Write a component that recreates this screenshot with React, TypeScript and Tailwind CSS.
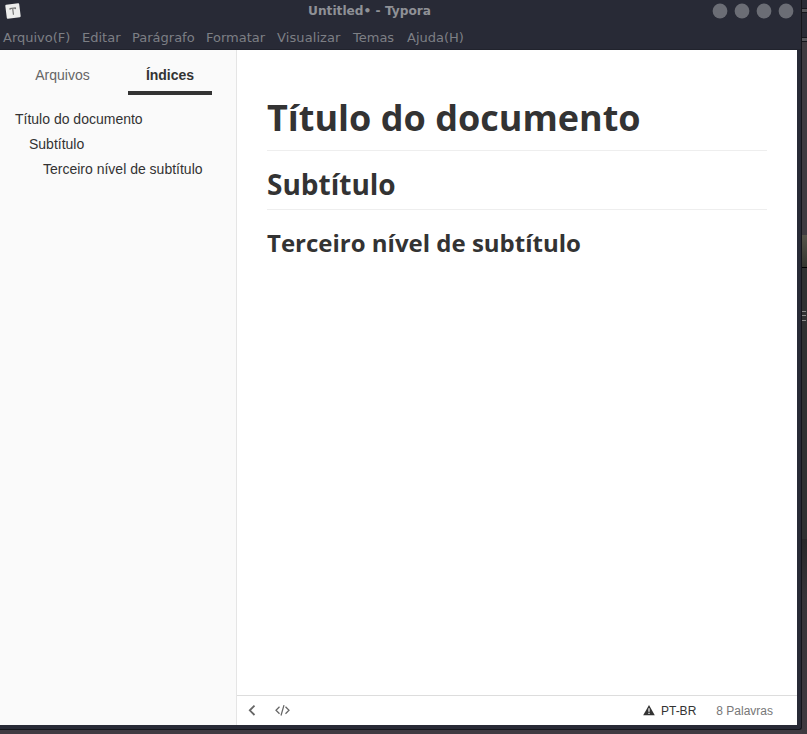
import React from "react";

const menus = [
  { label: "Arquivo(F)", width: "w-[79px]" },
  { label: "Editar", width: "w-[50px]" },
  { label: "Parágrafo", width: "w-[74px]" },
  { label: "Formatar", width: "w-[71px]" },
  { label: "Visualizar", width: "w-[76px]", spacing: "tracking-[0.1px]" },
  { label: "Temas", width: "w-[54px]" },
  { label: "Ajuda(H)", width: "w-[60px]" },
];

function TitleBar() {
  return (
    <div className="relative flex h-[22px] shrink-0 items-center justify-between pl-[5px] pr-[7px]">
      <svg width="16" height="16" viewBox="0 0 16 16" className="block">
        <g transform="rotate(-7 8 8)">
          <rect x="1" y="1" width="14" height="14" rx="1" fill="#ededed" />
          <path d="M5.1 5.3H10.9M8 5.2V11.8M5.3 4.9V6.4M10.7 4.9V6.4" stroke="#777" strokeWidth="1.2" fill="none" />
        </g>
      </svg>
      <div className="absolute left-[308px] top-[4px] whitespace-nowrap font-['DejaVu_Sans',sans-serif] text-[12.2px] font-bold leading-[15px] text-[#8f9196]">
        Untitled• - Typora
      </div>
      <div className="flex gap-[6px]">
        {[0, 1, 2, 3].map((n) => (
          <svg key={n} width="16" height="16" viewBox="0 0 16 16" className="block">
            <circle cx="8" cy="8" r="7.4" fill="#6b6d75" />
          </svg>
        ))}
      </div>
    </div>
  );
}

function MenuBar() {
  return (
    <div className="flex h-7 shrink-0 whitespace-nowrap border-b border-[#21232d] pl-[3px] pt-[8px] font-['DejaVu_Sans',sans-serif] text-[13px] leading-4 text-[#7d7f85]">
      {menus.map((m) => (
        <span key={m.label} className={`${m.width} ${m.spacing ?? ""}`}>
          {m.label}
        </span>
      ))}
    </div>
  );
}

function Sidebar() {
  return (
    <aside className="w-[237px] shrink-0 border-r border-[#e5e5e5] bg-[#fafafa] font-['Liberation_Sans',sans-serif] text-[14px] text-[#333]">
      <div className="flex h-[45px] gap-[24px] pl-[21px] text-center leading-[50px]">
        <div className="w-[83px] text-[#666]">Arquivos</div>
        <div className="w-[84px] border-b-4 border-[#333] font-bold">Índices</div>
      </div>
      <div className="whitespace-nowrap pt-3 leading-[25px]">
        <div className="pl-[15px]">Título do documento</div>
        <div className="pl-[29px]">Subtítulo</div>
        <div className="pl-[43px]">Terceiro nível de subtítulo</div>
      </div>
    </aside>
  );
}

function StatusBar() {
  return (
    <footer className="flex h-[30px] shrink-0 items-center border-t border-[#ddd] font-['Liberation_Sans',sans-serif] text-[12px]">
      <svg width="8" height="12" viewBox="0 0 8 12" className="mb-px ml-[11px]">
        <path d="M6.5 1.6L1.8 6.3L6.5 11" fill="none" stroke="#666" strokeWidth="1.8" />
      </svg>
      <svg width="15" height="12" viewBox="0 0 15 12" className="mb-px ml-[19px]">
        <path d="M4.5 2.8L1 6.3L4.5 9.8M10.5 2.8L14 6.3L10.5 9.8M9 1.1L6 11.5" fill="none" stroke="#666" strokeWidth="1.25" />
      </svg>
      <svg width="12" height="11" viewBox="0 0 12 11" className="mb-px ml-auto mr-[6px]">
        <path d="M6 .1L11.8 10.2H.2Z" fill="#333" />
        <path d="M6 3.3V6.8M6 7.8V9.1" stroke="white" strokeWidth="1.2" />
      </svg>
      <span className="mr-[20px] text-[#333]">PT-BR</span>
      <span className="mr-[24px] text-[#777]">8 Palavras</span>
    </footer>
  );
}

function Document() {
  return (
    <main className="min-h-0 flex-1 whitespace-nowrap px-[30px] font-['Open_Sans',sans-serif] font-bold text-[#333]">
      <h1 className="mt-[46px] h-[55px] border-b border-[#eee] text-[36px] leading-[43px]">Título do documento</h1>
      <h2 className="mt-[16px] h-[43px] border-b border-[#eee] text-[28px] leading-[34px]">Subtítulo</h2>
      <h3 className="mt-[16px] text-[24px] leading-[34px]">Terceiro nível de subtítulo</h3>
    </main>
  );
}

/* Sliver of the windows that lie behind this one. */
function Backdrop() {
  return (
    <div className="flex w-[5px] shrink-0 flex-col bg-[#3f3b41]">
      <div className="h-[8px] bg-[#292b36]" />
      <div className="h-[5px] border-y border-[#15161c] bg-[#55565b]" />
      <div className="h-[24px] bg-[#292b36]" />
      <div className="h-[5px] border-y border-[#15161c] bg-[#55565b]" />
      <div className="h-[193px] bg-[#3f3b41]" />
      <div className="h-[33px] border-b border-black bg-linear-to-b from-[#56544a] to-[#353630]" />
      <div className="flex h-[271px] flex-col gap-[3px] bg-[#303132] pt-[43px]">
        <i className="h-px w-1 bg-[#8a8a8a]" />
        <i className="h-px w-1 bg-[#8a8a8a]" />
        <i className="mt-px h-px w-1 bg-[#8a8a8a]" />
      </div>
      <div className="flex-1 bg-linear-to-b from-[#29282a] via-[#373439] via-30% to-[#3f3a40]" />
    </div>
  );
}

export default function App() {
  return (
    <div className="flex h-[734px] w-[807px] overflow-hidden bg-[#403b42]">
      <div className="flex h-[730px] w-[802px] shrink-0 flex-col rounded-br-[3px] border-b border-r border-[#14151b] bg-[#282a36]">
        <TitleBar />
        <MenuBar />
        <div className="mr-1 flex h-[675px] shrink-0 bg-white">
          <Sidebar />
          <div className="flex min-w-0 flex-1 flex-col">
            <Document />
            <StatusBar />
          </div>
        </div>
      </div>
      <Backdrop />
    </div>
  );
}
